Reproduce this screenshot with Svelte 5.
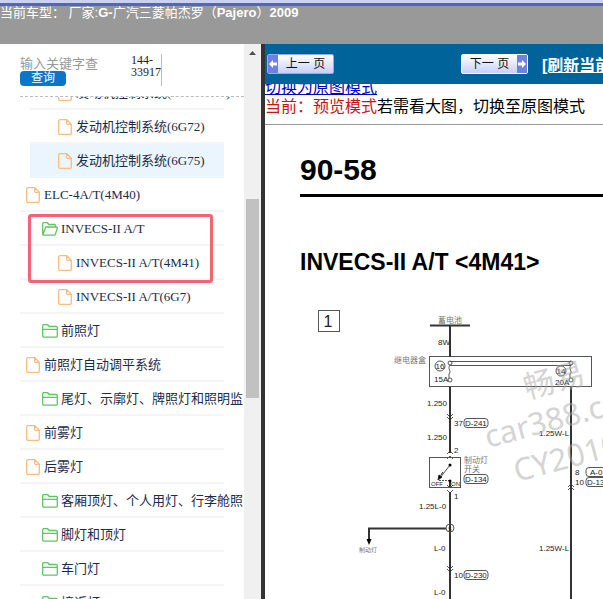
<script lang="ts">
  interface TreeRow {
    label: string;
    kind: 'file' | 'folder' | 'open';
    level: number;
    inset?: boolean;
    active?: boolean;
  }

  let keyword = '';

  const rows: TreeRow[] = [
    { label: '发动机控制系统(4M40-EFI)', kind: 'file', level: 3, inset: true },
    { label: '发动机控制系统(6G72)', kind: 'file', level: 3, inset: true },
    { label: '发动机控制系统(6G75)', kind: 'file', level: 3, inset: true, active: true },
    { label: 'ELC-4A/T(4M40)', kind: 'file', level: 1 },
    { label: 'INVECS-II A/T', kind: 'open', level: 2 },
    { label: 'INVECS-II A/T(4M41)', kind: 'file', level: 3 },
    { label: 'INVECS-II A/T(6G7)', kind: 'file', level: 3 },
    { label: '前照灯', kind: 'folder', level: 2 },
    { label: '前照灯自动调平系统', kind: 'file', level: 1 },
    { label: '尾灯、示廓灯、牌照灯和照明监', kind: 'folder', level: 2 },
    { label: '前雾灯', kind: 'file', level: 1 },
    { label: '后雾灯', kind: 'file', level: 1 },
    { label: '客厢顶灯、个人用灯、行李舱照', kind: 'folder', level: 2 },
    { label: '脚灯和顶灯', kind: 'folder', level: 2 },
    { label: '车门灯', kind: 'folder', level: 2 },
    { label: '接近灯', kind: 'folder', level: 2 }
  ];
</script>

<div class="app">
  <header class="topbar">当前车型： 厂家:<b>G-</b>广汽三菱帕杰罗（<b>Pajero</b>）<b>2009</b></header>

  <div class="workspace">
    <aside class="sidebar">
      <form class="search" on:submit|preventDefault>
        <div class="search-fields">
          <input type="text" aria-label="关键字" placeholder="输入关键字查询" bind:value={keyword} />
          <button type="submit">查询</button>
        </div>
        <span class="counter">144-<br />33917</span>
      </form>

      <nav class="tree">
        <ul>
          {#each rows as row}
            <li class="row level-{row.level}" class:inset={row.inset} class:active={row.active}>
              <a href="#node">
                {#if row.kind === 'file'}
                  <svg class="icon-file" width="14" height="16" viewBox="0 0 14 16">
                    <path d="M2 .7h6.8l4.5 4.6V14a1.3 1.3 0 0 1-1.3 1.3H2A1.3 1.3 0 0 1 .7 14V2A1.3 1.3 0 0 1 2 .7zM8.6 1v3.3a1 1 0 0 0 1 1h3.6" />
                  </svg>
                {:else if row.kind === 'folder'}
                  <svg class="icon-folder" width="16" height="14" viewBox="0 0 16 14">
                    <path d="M.7 12V1.700a1 1 0 0 1 1-1h4l1.6 1.8h7a1 1 0 0 1 1 1V12a1.2 1.2 0 0 1-1.2 1.2H1.9A1.2 1.2 0 0 1 .7 12zM.7 5.300h14.6" />
                  </svg>
                {:else}
                  <svg class="icon-folder" width="16" height="14" viewBox="0 0 16 14">
                    <path d="M.7 12.5V1.7a1 1 0 0 1 1-1h3.6l1.6 1.8h5.6a1 1 0 0 1 1 1v1.4M.9 13l2.5-7.2a1.2 1.2 0 0 1 1.1-.8h10a.8.8 0 0 1 .8 1.1l-1.9 6.1a1.4 1.4 0 0 1-1.3 1H1.4z" />
                  </svg>
                {/if}
                <span>{row.label}</span>
              </a>
            </li>
          {/each}
        </ul>
        <div class="mark"></div>
      </nav>
    </aside>

    <div class="scrollbar">
      <svg width="17" height="17" viewBox="0 0 17 17"><path d="M5 11l3.5-4 3.5 4z" fill="#505050" /></svg>
      <div class="thumb"></div>
    </div>

    <main class="viewer">
      <div class="toolbar">
        <button class="pager" type="button">
          <svg class="cap" width="10" height="18" viewBox="0 0 10 18"><path d="M1 9l4-4v2.500h4v3H5V13z" /></svg>
          <span>上一 页</span>
        </button>
        <button class="pager next" type="button">
          <span>下一 页</span>
          <svg class="cap" width="10" height="18" viewBox="0 0 10 18"><path d="M9 9L5 5v2.500H1v3h4V13z" /></svg>
        </button>
        <a class="refresh" href="#refresh">[刷新当前页]</a>
      </div>

      <div class="document">
        <div class="mode">
          <a href="#origin">切换为原图模式</a>
          <p><em>当前：预览模式</em>若需看大图，切换至原图模式</p>
        </div>
        <hr />
        <article class="sheet">
          <h1>90-58</h1>
          <h2>INVECS-II A/T &lt;4M41&gt;</h2>
        </article>

        <svg class="diagram" width="400" height="320" viewBox="265 290 400 320">
          <g class="thin">
            <rect x="318.500" y="310.500" width="21" height="21" />
            <rect x="429.500" y="356.500" width="162" height="30" />
            <path d="M450 361.500h121M450 365.500h121" />
            <path d="M450 365c-3 4 2 6-1 9v4M571 365c-3 4 2 6-1 9v4" />
            <rect x="429.500" y="457.500" width="31" height="30" />
            <path d="M450 480.500h-11" stroke-dasharray="2 1" />
            <path d="M450 465l-10 13" />
            <path d="M447 417l3 3 3-3M447 414l3 3 3-3M447 454l3-3 3 3M447 459l3-3 3 3M447 485l3 3 3-3M447 490l3 3 3-3" />
            <path d="M447 566l3 3 3-3M447 569l3 3 3-3M568 487l3-3 3 3M568 490l3-3 3 3" />
          </g>

          <g class="wire">
            <path d="M430 325.500h40" />
            <path d="M450 325v32M450 387v66M450 481v6M450 492v120M571 387v225" />
            <path d="M446 528.500h-77v12" />
          </g>
          <path d="M366.500 539h5l-2.500 6z" />
          <path d="M438 480l1-5 3 2zM441 475l2-3" stroke="#222" />
          <circle cx="450" cy="465" r="1.500" />
          <circle cx="450" cy="481" r="1.500" />

          <g class="node">
            <circle cx="450" cy="363" r="2" />
            <circle cx="450" cy="380" r="2" />
            <circle cx="571" cy="363" r="2" />
            <circle cx="571" cy="380" r="2" />
            <circle cx="440" cy="366" r="5" />
            <circle cx="561" cy="371" r="5" />
            <circle cx="450" cy="528" r="4" />
            <rect x="464" y="418.500" width="24" height="9" rx="3" />
            <rect x="464" y="474.500" width="24" height="9" rx="3" />
            <rect x="464" y="570.500" width="24" height="9" rx="3" />
            <rect x="586" y="467.500" width="28" height="9" rx="3" />
            <rect x="586" y="477.500" width="28" height="9" rx="3" />
          </g>

          <g class="label">
            <text class="sheet-no" x="328" y="327" text-anchor="middle">1</text>
            <text x="438" y="345">8W</text>
            <text x="440" y="369" text-anchor="middle">16</text>
            <text x="561" y="374" text-anchor="middle">14</text>
            <text x="434" y="382">15A</text>
            <text x="555" y="385">20A</text>
            <text x="427" y="406">1.250</text>
            <text x="427" y="440">1.250</text>
            <text x="454" y="426">37</text>
            <text x="465" y="426">D-241</text>
            <text x="454" y="453">2</text>
            <text x="431" y="486" class="small">OFF</text>
            <text x="451" y="486" class="small">ON</text>
            <text x="465" y="482">D-134</text>
            <text x="454" y="499">1</text>
            <text x="419" y="509">1.25L-0</text>
            <text x="450" y="531" text-anchor="middle" class="small">5</text>
            <text x="434" y="551">L-0</text>
            <text x="454" y="578">10</text>
            <text x="465" y="578">D-230</text>
            <text x="434" y="595">L-0</text>
            <text x="539" y="436">1.25W-L</text>
            <text x="539" y="551">1.25W-L</text>
            <text x="575" y="475">8</text>
            <text x="590" y="475">A-03</text>
            <text x="575" y="485">10</text>
            <text x="587" y="485">D-132</text>
          </g>

          <g class="caption">
            <text x="438" y="323">蓄电池</text>
            <text x="394" y="363">继电器盒</text>
            <text x="464" y="463">制动灯</text>
            <text x="464" y="472">开关</text>
            <text x="359" y="552" class="tiny">制动灯</text>
          </g>

          <g class="watermark">
            <text transform="translate(527 399) rotate(-15)">畅易</text>
            <text transform="translate(488 448) rotate(-15)">car388.com</text>
            <text transform="translate(517 482) rotate(-15)">CY2010</text>
          </g>
        </svg>
      </div>
    </main>
  </div>
</div>

<style>
  :global(body) {
    margin: 0;
  }

  .app {
    display: flex;
    flex-direction: column;
    height: 100vh;
    overflow: hidden;
    background: #fff;
    font-family: 'Liberation Sans', 'Noto Sans CJK SC', sans-serif;
  }

  .topbar {
    box-sizing: border-box;
    flex: none;
    height: 44px;
    border-top: 3px solid #c9d3ee;
    box-shadow: inset 0 3px #4a69c0;
    background: #999;
    color: #fff;
    font-size: 13px;
    line-height: 20px;
    white-space: nowrap;
  }

  .workspace {
    display: flex;
    flex: 1;
    min-height: 0;
  }

  .sidebar {
    display: flex;
    flex: none;
    flex-direction: column;
    width: 244px;
    overflow: hidden;
  }

  .search {
    display: flex;
    flex: none;
    align-items: flex-start;
    height: 42px;
    margin-left: 20px;
    padding-top: 10px;
    border-bottom: 1px dashed #bbb;
  }
  .search-fields {
    display: flex;
    flex-direction: column;
    align-items: flex-start;
    width: 111px;
  }
  .search input {
    box-sizing: border-box;
    width: 78px;
    height: 17px;
    padding: 2px 0 0;
    border: none;
    font-family: inherit;
    font-size: 13px;
  }
  .search input::placeholder {
    color: #999;
  }
  .search button {
    width: 46px;
    height: 15px;
    padding: 0;
    border: none;
    border-radius: 4px;
    background: #0a76c9;
    color: #fff;
    font-family: inherit;
    font-size: 12px;
    line-height: 15px;
    cursor: pointer;
  }
  .counter {
    width: 30px;
    height: 32px;
    border-right: 1px solid #bbb;
    font-family: 'Liberation Serif', serif;
    font-size: 12px;
    line-height: 12px;
    color: #222;
  }

  .tree {
    position: relative;
    flex: 1;
    min-height: 0;
    overflow: hidden;
  }
  .tree ul {
    margin: -21px 0 0;
    padding: 0 20px;
    list-style: none;
  }
  .row {
    box-sizing: border-box;
    height: 34px;
    border-bottom: 2px solid #f5f5f5;
  }
  .row.inset {
    margin-left: 10px;
  }
  .row.active {
    border-color: #ebf5fd;
    background: #ebf5fd;
  }
  .row a {
    display: flex;
    align-items: center;
    gap: 4px;
    height: 34px;
    color: #1c2b4a;
    font-family: 'Liberation Serif', 'Noto Sans CJK SC', serif;
    font-size: 13px;
    line-height: 34px;
    white-space: nowrap;
    text-decoration: none;
  }
  .row span {
    height: 34px;
  }
  .row svg {
    flex: none;
    fill: none;
    stroke-width: 1.3;
  }
  .level-1 a {
    padding-left: 6px;
  }
  .level-2 a {
    gap: 3px;
    padding-left: 22px;
  }
  .level-3 a {
    padding-left: 38px;
  }
  .inset a {
    padding-left: 28px;
  }
  .icon-file {
    stroke: #f5bd80;
  }
  .icon-folder {
    stroke: #5fc463;
  }

  .mark {
    box-sizing: border-box;
    position: absolute;
    top: 117px;
    left: 28px;
    width: 185px;
    height: 69px;
    border: 3px solid #f46472;
    border-radius: 3px;
    pointer-events: none;
  }

  .scrollbar {
    display: flex;
    flex: none;
    flex-direction: column;
    align-items: center;
    width: 17px;
    background: #f0f0f0;
  }
  .thumb {
    width: 13px;
    height: 199px;
    margin-top: 138px;
    background: #c1c1c1;
  }

  .viewer {
    display: flex;
    flex: 1;
    flex-direction: column;
    min-width: 0;
    overflow: hidden;
    border-left: 4px solid #333;
  }

  .toolbar {
    display: flex;
    flex: none;
    align-items: center;
    height: 40px;
    padding-left: 2px;
    background: #006399;
    white-space: nowrap;
  }
  .pager {
    display: flex;
    flex: none;
    align-items: stretch;
    box-sizing: border-box;
    width: 67px;
    height: 20px;
    padding: 0;
    border: 1px solid #9aa8ee;
    border-radius: 2px;
    background: linear-gradient(#fff, #c8cffa);
    color: #111;
    font-family: inherit;
    font-size: 12px;
    line-height: 18px;
    cursor: pointer;
  }
  .pager span {
    flex: 1;
    text-align: center;
  }
  .pager.next {
    margin-left: 127px;
    border-color: #fff;
  }
  .cap {
    flex: none;
    background: #7080e0;
    fill: #fff;
  }
  .refresh {
    margin-left: 14px;
    color: #fff;
    font-size: 16px;
    font-weight: bold;
  }

  .document {
    flex: 1;
    min-height: 0;
    overflow: hidden;
  }
  .mode {
    margin-top: -6px;
    font-size: 16px;
    line-height: 19px;
    white-space: nowrap;
  }
  .mode a {
    display: block;
    color: #0000c8;
  }
  .mode p {
    margin: 0;
  }
  .mode em {
    color: #c81414;
    font-style: normal;
  }
  .document hr {
    margin: 8px 0 0;
    border: none;
    border-top: 1px solid #999;
  }

  .sheet {
    padding: 28px 0 0 35px;
    color: #000;
    white-space: nowrap;
  }
  .sheet h1 {
    margin: 0;
    padding-bottom: 7px;
    border-bottom: 3px solid #000;
    font-size: 30px;
    line-height: 34px;
  }
  .sheet h2 {
    margin: 51px 0 0;
    font-size: 23px;
    line-height: 28px;
  }

  .diagram {
    display: block;
    margin-top: 14px;
  }
  .thin {
    fill: none;
    stroke: #555;
    stroke-width: 1;
  }
  .wire {
    fill: none;
    stroke: #333;
    stroke-width: 2;
  }
  .node {
    fill: none;
    stroke: #555;
    stroke-width: 1;
  }
  .label {
    fill: #222;
    font-family: 'Liberation Sans', sans-serif;
    font-size: 8px;
  }
  .label .small {
    font-size: 6px;
  }
  .label .sheet-no {
    font-size: 16px;
  }
  .caption {
    fill: #777;
    font-family: 'Noto Sans CJK SC', sans-serif;
    font-size: 8px;
  }
  .caption .tiny {
    font-size: 6px;
  }
  .watermark {
    fill: #aaa;
    opacity: 0.5;
    font-family: 'Noto Sans', 'Noto Sans CJK SC', sans-serif;
    font-size: 31px;
  }
</style>
